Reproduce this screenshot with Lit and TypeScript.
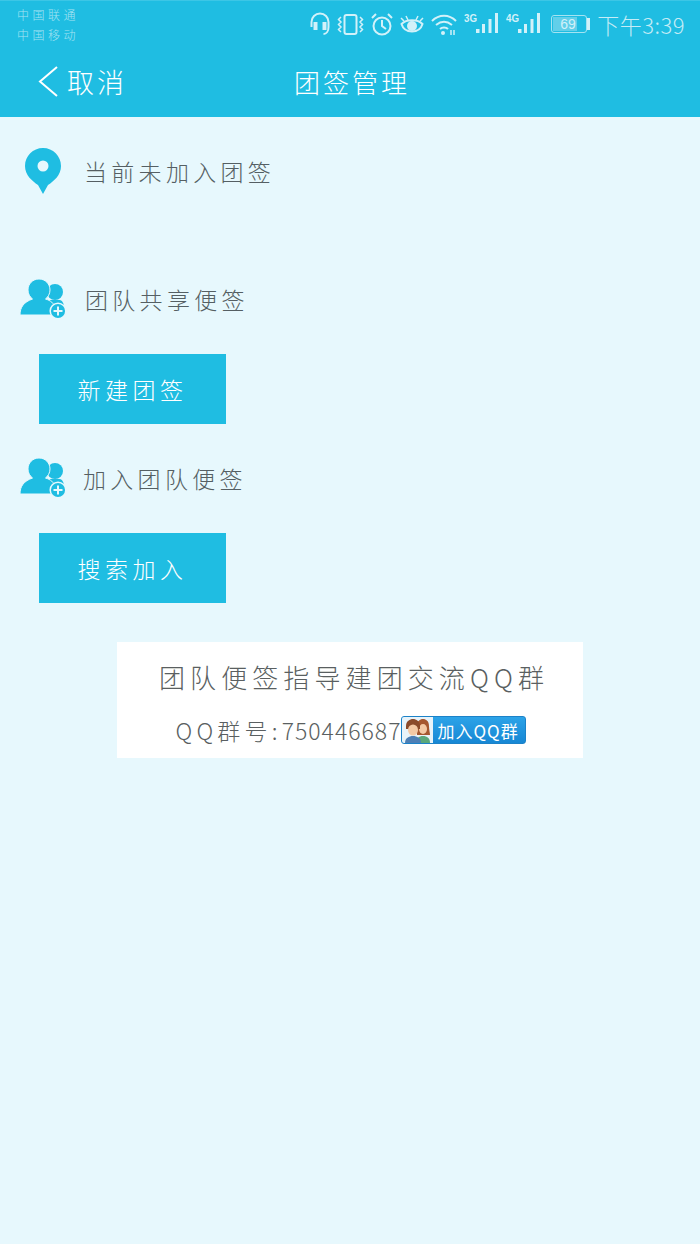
import { LitElement, html, css, svg } from 'lit';
import { customElement } from 'lit/decorators.js';

const peopleIcon = html`<svg class="people" width="46" height="40" viewBox="0 0 46 40">
  <circle cx="35" cy="13" r="8" fill="#1fbde2"/>
  <path d="M29 21h11c3 1 4 4 4 8l-14 6-4-9z" fill="#1fbde2"/>
  <path d="M19 0c6.500 0 11 5 11 11 0 4-2 7-4.500 9 5 1.500 8.500 4 9.500 9 .3 2 .4 4 .4 7H0c0-8 4-13 12.500-16C10 18 8 15 8 11 8 5 12.500 0 19 0z" fill="#1fbde2" stroke="#e7f8fd" stroke-width="1"/>
  <circle cx="38" cy="32" r="7.800" fill="#1fbde2" stroke="#e7f8fd" stroke-width="1.500"/>
  <path d="M38 27.500v9M33.500 32h9" stroke="#e7f8fd" stroke-width="2"/>
</svg>`;

const bars = (id: string) => svg`<svg width="35" height="24" viewBox="0 0 35 24">
  <text x="0" y="10" font-size="10" font-weight="700" font-family="Liberation Sans, sans-serif" fill="#d2f1f9" textLength="13" lengthAdjust="spacingAndGlyphs">${id}</text>
  <g fill="#d2f1f9">
    <rect x="12" y="17" width="3.500" height="4"/>
    <rect x="18" y="12" width="3" height="9"/>
    <rect x="24.500" y="7" width="3" height="14"/>
    <rect x="31" y="1" width="3" height="20"/>
  </g>
</svg>`;

@customElement('app-root')
export class AppRoot extends LitElement {
  static styles = css`
    :host {
      display: block;
      width: 700px;
      height: 1244px;
      background: #e7f8fd;
      font-family: 'Noto Sans CJK SC', 'Liberation Sans', sans-serif;
      font-weight: 300;
      color: #555f63;
      overflow: hidden;
    }
    .top {
      height: 117px;
      box-sizing: border-box;
      background: #1fbde2;
      border-top: 1px solid #3cc6e6;
      display: flex;
      flex-direction: column;
    }
    .status {
      height: 49px;
      display: flex;
      justify-content: space-between;
      padding: 4px 15px 0 17px;
    }
    .carriers {
      font-size: 12px;
      line-height: 20px;
      letter-spacing: 3.500px;
      color: #a5e3f2;
    }
    .icons {
      display: flex;
      align-items: center;
      gap: 7px;
      height: 40px;
      margin-top: -1px;
      color: #d2f1f9;
    }
    .icons svg {
      display: block;
      flex: none;
    }
    .battery {
      width: 36px;
      height: 18px;
      border: 1px solid #a5e3f2;
      border-radius: 3px;
      box-sizing: border-box;
      margin-left: 3px;
      padding: 1px;
    }
    .battery span {
      display: block;
      width: 24px;
      height: 14px;
      background: #62cfe9;
      font: 14px/14px 'Liberation Sans', sans-serif;
      color: #d2f1f9;
      white-space: nowrap;
      padding-left: 7px;
      box-sizing: border-box;
    }
    .tip {
      width: 3px;
      height: 12px;
      background: #d2f1f9;
      margin-left: -7px;
    }
    .time {
      font-size: 22px;
      color: #c5ecf6;
      letter-spacing: 0.5px;
      white-space: nowrap;
    }
    .nav {
      flex: 1;
      display: grid;
      grid-template-columns: 1fr auto 1fr;
      align-items: center;
      padding: 0 0 6px 38px;
      color: #fff;
      margin-top: -2px;
    }
    .back {
      display: flex;
      align-items: center;
      gap: 8px;
      font-size: 27px;
      letter-spacing: 3px;
    }
    .title {
      font-size: 26px;
      letter-spacing: 3px;
      margin-left: -34px;
    }
    .row {
      display: flex;
      align-items: center;
      font-size: 23px;
      letter-spacing: 4.300px;
    }
    .row.loc {
      padding: 31px 0 0 25px;
      gap: 23px;
    }
    .row.team {
      padding-left: 20px;
      gap: 19px;
    }
    .row.first {
      margin-top: 85px;
    }
    .row.second {
      margin-top: 34px;
      gap: 17px;
    }
    .btn {
      width: 187px;
      height: 70px;
      margin: 35px 0 0 39px;
      background: #1fbde2;
      color: #fff;
      font-size: 23px;
      letter-spacing: 4.500px;
      display: flex;
      align-items: center;
      justify-content: center;
    }
    .card {
      width: 466px;
      height: 116px;
      box-sizing: border-box;
      margin: 39px 0 0 117px;
      background: #fff;
      display: flex;
      flex-direction: column;
      align-items: center;
      padding-top: 16px;
      color: #5a5f61;
    }
    .card h2 {
      margin: 0 0 0 8px;
      font-size: 26px;
      line-height: 38px;
      font-weight: 300;
      letter-spacing: 5.100px;
      white-space: nowrap;
    }
    .line {
      display: flex;
      align-items: center;
      margin: 18px 0 0 2px;
      font-size: 23px;
      letter-spacing: 1px;
      height: 32px;
      white-space: nowrap;
    }
    .prefix {
      letter-spacing: 4.200px;
    }
    .qq {
      width: 125px;
      height: 28px;
      box-sizing: border-box;
      border: 1px solid #1c82c8;
      border-radius: 3px;
      background: linear-gradient(#2ca3e8, #1787d4);
      display: flex;
      align-items: center;
      color: #fff;
      font-size: 17px;
      font-weight: 400;
      letter-spacing: 1px;
      overflow: hidden;
    }
    .qq .face {
      width: 31px;
      height: 26px;
      background: #e8f3f9;
      margin-right: 4px;
      flex: none;
    }
    .qq .face svg {
      display: block;
    }
  `;

  render() {
    return html`
      <div class="top">
        <div class="status">
          <div class="carriers">中国联通<br />中国移动</div>
          <div class="icons">
            <svg width="20" height="24" viewBox="0 0 20 24" fill="none" stroke="#d2f1f9" stroke-width="2">
              <path d="M1.500 15V10a8.500 8.500 0 0 1 17 0v5c0 4-2 7-5 7"/>
              <rect x="4.500" y="11" width="2" height="6" fill="#d2f1f9"/>
              <rect x="13.500" y="11" width="2" height="6" fill="#d2f1f9"/>
            </svg>
            <svg width="27" height="24" viewBox="0 0 27 24" fill="none" stroke="#d2f1f9" stroke-width="2">
              <rect x="7.500" y="3" width="12" height="19" rx="2"/>
              <path d="M4 5L1.500 7.500 4 10 1.500 12.500 4 15 1.500 17.500 4 20M23 5l2.500 2.500L23 10l2.500 2.500L23 15l2.500 2.500L23 20" stroke-width="1.500"/>
            </svg>
            <svg width="22" height="24" viewBox="0 0 22 24" fill="none" stroke="#d2f1f9" stroke-width="2">
              <circle cx="11" cy="14" r="8.500"/>
              <path d="M11 8v6l4 3M1 6l4-4M21 6l-4-4"/>
            </svg>
            <svg width="24" height="24" viewBox="0 0 24 24" fill="none" stroke="#d2f1f9" stroke-width="2">
              <path d="M1.500 12c5-5 16-5 21 0-3 10-18 10-21 0z"/>
              <circle cx="12" cy="14" r="5" fill="#d2f1f9" stroke="none"/>
              <path d="M6 4l2 4M18 4l-2 4M1 6l3 3M23 6l-3 3" stroke-width="1.500"/>
            </svg>
            <svg width="26" height="24" viewBox="0 0 26 24" fill="none" stroke="#d2f1f9" stroke-width="2">
              <path d="M1 9c7-7 17-7 24 0M5 13c5-4 11-4 16 0M9 17c2-2 6-2 8 0"/>
              <circle cx="12" cy="21" r="2" fill="#d2f1f9" stroke="none"/>
              <path d="M20 18v5M23 18v5" stroke-width="1.500"/>
            </svg>
            ${bars('3G')} ${bars('4G')}
            <div class="battery"><span>69</span></div>
            <div class="tip"></div>
            <div class="time">下午3:39</div>
          </div>
        </div>
        <div class="nav">
          <div class="back">
            <svg width="21" height="31" viewBox="0 0 21 31" fill="none" stroke="#fff" stroke-width="2">
              <path d="M19 1L2 15.500 19 30"/>
            </svg>
            <span>取消</span>
          </div>
          <div class="title">团签管理</div>
          <div></div>
        </div>
      </div>

      <div class="row loc">
        <svg width="36" height="46" viewBox="0 0 36 46">
          <path d="M18 0c10 0 18 8 18 18 0 9-7 15-13 19l-5 9-5-9C7 33 0 27 0 18 0 8 8 0 18 0z" fill="#1fbde2"/>
          <circle cx="18" cy="18" r="5.500" fill="#e7f8fd"/>
        </svg>
        <span>当前未加入团签</span>
      </div>

      <div class="row team first">${peopleIcon}<span>团队共享便签</span></div>
      <div class="btn">新建团签</div>

      <div class="row team second">${peopleIcon}<span>加入团队便签</span></div>
      <div class="btn">搜索加入</div>

      <div class="card">
        <h2>团队便签指导建团交流QQ群</h2>
        <div class="line">
          <span><span class="prefix">QQ群号:</span>750446687</span>
          <div class="qq">
            <div class="face">
              <svg width="31" height="26" viewBox="0 0 31 26">
                <path d="M15 9c0-5 3-7 6-7s6 2 6 7c0 4 1 7 1 9H15z" fill="#a5572f"/>
                <path d="M14 26c0-5 3-7 7-7s7 2 7 7z" fill="#5aa77a"/>
                <ellipse cx="21" cy="12" rx="4" ry="5" fill="#f3c9a5"/>
                <path d="M4 9c0-5 4-7 7-7s7 2 7 7v3H4z" fill="#8a4a2a"/>
                <path d="M3 26c0-5 4-7 8-7s8 2 8 7z" fill="#4d7fb5"/>
                <ellipse cx="11" cy="13" rx="5" ry="5.500" fill="#f3c9a5"/>
              </svg>
            </div>
            <span>加入QQ群</span>
          </div>
        </div>
      </div>
    `;
  }
}
